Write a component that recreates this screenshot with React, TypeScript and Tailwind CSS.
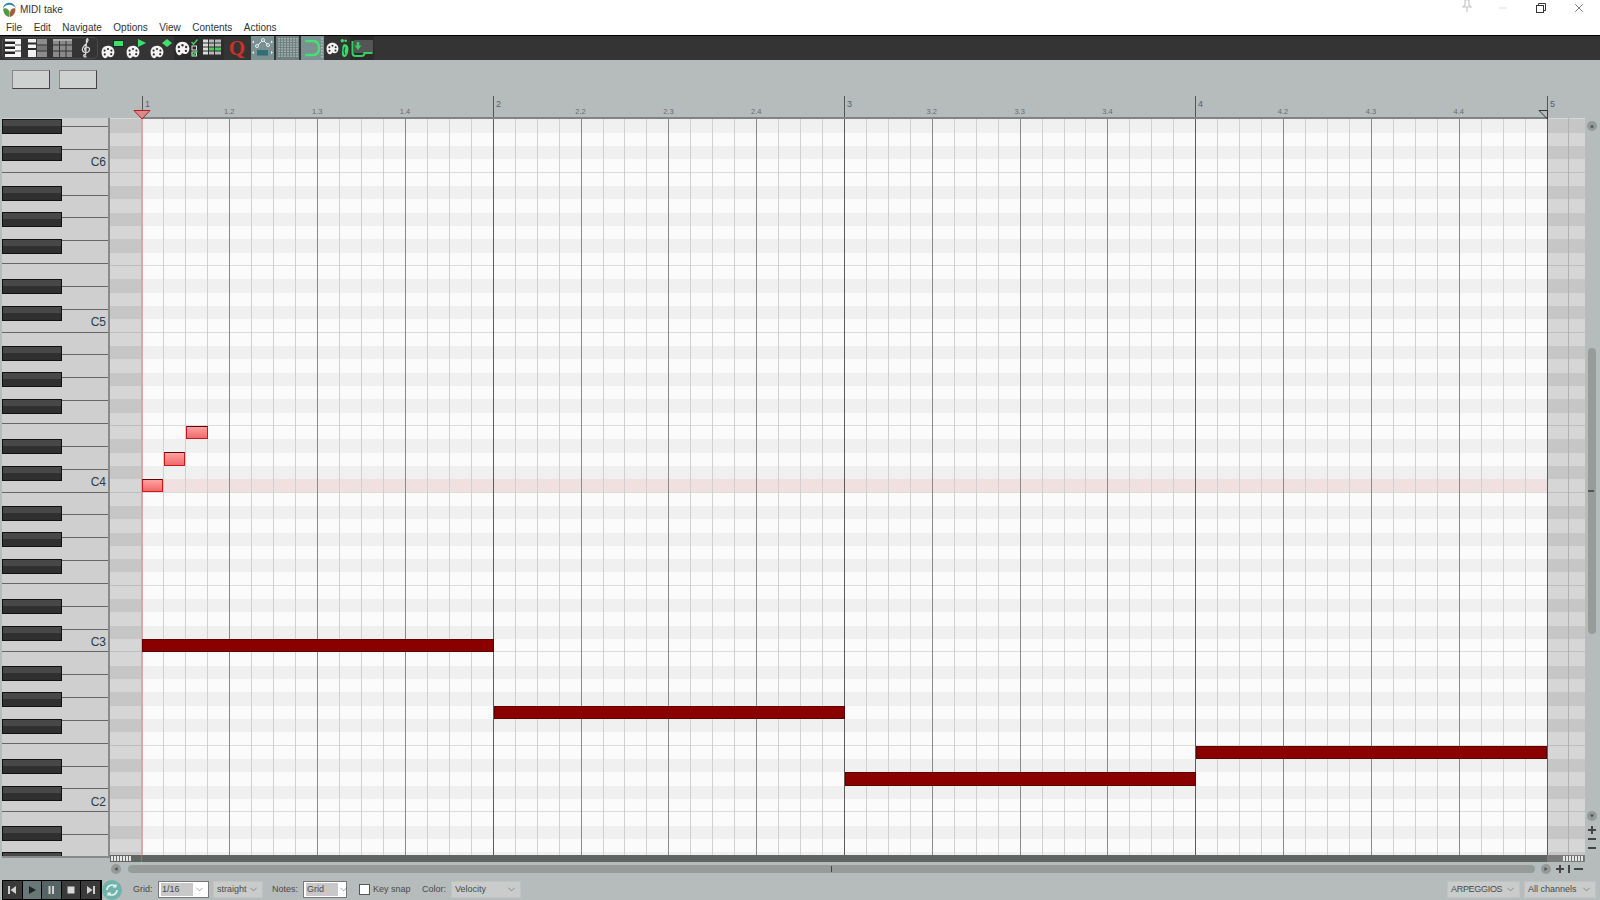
import React from "react";
import { ChevronDown, X, Minus } from "lucide-react";

const ROW = 40 / 3;
const semis: number[] = [];
for (let s = 28; s >= -29; s--) semis.push(s);
const isBlack = (s: number) => [1, 3, 6, 8, 10].includes(((s % 12) + 12) % 12);
const mod = (s: number) => ((s % 12) + 12) % 12;
const rowTop = (s: number) => 492.67 - ROW * s - ROW - 118;
const M = 351.25;
const G0 = 32;

function Palette({ s = 14 }: { s?: number }) {
  return (
    <svg width={s} height={s} viewBox="0 0 14 14" className="shrink-0">
      <path d="M7 .8C3 .8.6 3.6.6 7.2c0 3 1.3 5.6 3.2 6 1.7.3 2-1 2.900-1.700.9-.6 1.300 1 3.200.7 2-.4 3.500-2.600 3.500-5C13.400 3.400 10.600.8 7 .8z" fill="#f4f4f4" />
      <circle cx="3.600" cy="5.600" r="1.100" fill="#333" />
      <circle cx="7" cy="4" r="1.100" fill="#333" />
      <circle cx="10.400" cy="5.600" r="1.100" fill="#333" />
      <circle cx="3.800" cy="9.400" r="1.100" fill="#333" />
      <circle cx="10.200" cy="9.200" r="1.100" fill="#333" />
    </svg>
  );
}

function Logo() {
  return (
    <svg width="15" height="15" viewBox="0 0 15 15" className="ml-[2px]">
      <path d="M7 15C3 14 .8 10 1.400 6.400 4 5.600 6.600 7 7.400 9.400 7.800 11 7.600 13 7 15z" fill="#4e9a3c" />
      <path d="M7.600 15c3.800-.8 6.200-4.400 5.800-8.600C11 5.600 8.800 7 8.200 9.400 7.800 11 7.800 13 7.600 15z" fill="#a85a3e" />
      <path d="M1 6C1.600 3 4.200.8 7.400.8c3 0 5.600 2 6.400 5.200C11.600 3.600 9.400 2.800 7.400 2.800 5 2.800 2.800 3.800 1 6z" fill="#2f7fb0" />
    </svg>
  );
}

function PianoIcon() {
  return (
    <svg width="16" height="18" viewBox="0 0 16 18" className="shrink-0">
      <rect x="0" y="0" width="16" height="18" fill="#f5f5f5" />
      <rect x="0" y="2.500" width="10" height="2.500" fill="#222" />
      <rect x="0" y="7.500" width="10" height="2.500" fill="#222" />
      <rect x="0" y="12.500" width="10" height="2.500" fill="#222" />
      <rect x="10" y="5.500" width="6" height="1" fill="#444" />
      <rect x="10" y="11.500" width="6" height="1" fill="#444" />
    </svg>
  );
}

function NamedIcon() {
  return (
    <svg width="19" height="18" viewBox="0 0 19 18" className="shrink-0">
      <rect x="0" y="0" width="8" height="18" fill="#f2f2f2" />
      <rect x="0" y="3.500" width="8" height="2" fill="#2a2a2a" />
      <rect x="0" y="9" width="8" height="2" fill="#2a2a2a" />
      <rect x="9" y="0" width="10" height="5.500" fill="#8c8c8c" />
      <rect x="9" y="6.500" width="10" height="5" fill="#777" />
      <rect x="9" y="12.500" width="10" height="5.500" fill="#8c8c8c" />
    </svg>
  );
}

function DrumIcon() {
  return (
    <svg width="19" height="18" viewBox="0 0 19 18" className="shrink-0">
      <rect x="0" y="0" width="19" height="18" fill="#8a8a8a" />
      <rect x="0" y="5.500" width="19" height="1" fill="#333" />
      <rect x="0" y="11.500" width="19" height="1" fill="#333" />
      <rect x="6" y="0" width="1" height="18" fill="#333" />
      <rect x="12.500" y="0" width="1" height="18" fill="#333" />
      <rect x="0" y="0" width="19" height="2" fill="#aaa" />
    </svg>
  );
}

function ClefIcon() {
  return (
    <svg width="10" height="20" viewBox="0 0 10 20" fill="none" stroke="#d8d8d8" strokeWidth="1.300" className="shrink-0">
      <path d="M5.500 18.500c-1.500 1-3 .2-2.800-1 .2-1 1.600-1 1.800 0L5.500 4c-.2-1.500 0-3 1-3.300 1 .6.800 3-3 6.800-2 2-2.500 3.500-2 5 .6 1.800 3.400 2.500 5.500 1.500 1.800-1 2-3.500.5-4.500-1.500-1-3.500-.2-3.800 1.200-.2 1 .4 1.700 1 2" />
    </svg>
  );
}

function CheckColumn() {
  return (
    <svg width="7" height="18" viewBox="0 0 7 18" fill="none" className="shrink-0">
      <path d="M.5 3l2 2.200L6.500.5" stroke="#3fd35f" strokeWidth="1.500" />
      <rect x="1" y="7" width="4.500" height="4" stroke="#ddd" />
      <rect x="1" y="13" width="4.500" height="4" stroke="#ddd" />
      <path d="M.5 14l2 2.200L6.500 11.500" stroke="#3fd35f" strokeWidth="1.500" />
    </svg>
  );
}

function ListIcon() {
  return (
    <svg width="18" height="18" viewBox="0 0 18 18" className="shrink-0">
      {[0, 4, 8, 12].map((y) => (
        <React.Fragment key={y}>
          <rect x="0" y={y + 0.5} width="5" height="3" fill="#dcdcdc" />
          <rect x="6" y={y + 0.5} width="5" height="3" fill={y === 8 ? "#3fd35f" : "#b8b8b8"} />
          <rect x="12" y={y + 0.5} width="6" height="3" fill={y === 8 ? "#3fd35f" : "#b8b8b8"} />
        </React.Fragment>
      ))}
    </svg>
  );
}

function EnvelopeIcon() {
  return (
    <svg width="23" height="22" viewBox="0 0 23 22" fill="none" className="shrink-0">
      <path d="M6 9l3-3 3-3 4 4 2 3" stroke="#e8efee" strokeWidth="1" />
      <circle cx="6" cy="9" r="1.500" fill="#7b9191" stroke="#e8efee" />
      <circle cx="12" cy="3" r="1.500" fill="#7b9191" stroke="#e8efee" />
      <circle cx="17" cy="8" r="1.500" fill="#7b9191" stroke="#e8efee" />
      <path d="M1 5l2-1.500v3zM22 5l-2-1.500v3zM1 15.500l2-1.500v3zM22 15.500l-2-1.500v3z" fill="#e8efee" />
      <rect x="6" y="13" width="11" height="5.500" fill="#2f6f75" />
    </svg>
  );
}

function GridIcon() {
  return (
    <svg width="20" height="20" viewBox="0 0 20 20" stroke="#cfd8d7" strokeWidth="1" strokeDasharray="1.500 1" className="shrink-0">
      {[1, 4, 7, 10, 13, 16, 19].map((x) => (
        <line key={x} x1={x} x2={x} y1="0" y2="20" />
      ))}
    </svg>
  );
}

function MagnetIcon() {
  return (
    <svg width="20" height="20" viewBox="0 0 20 20" fill="none" className="shrink-0">
      <path d="M2 3h8c4 0 6 3 6 7s-2 7-6 7H2" stroke="#45e070" strokeWidth="2.400" />
      <line x1="19" y1="0" x2="19" y2="20" stroke="#cfd8d7" strokeDasharray="1.500 1.500" />
    </svg>
  );
}

function FootIcon() {
  return (
    <svg width="9" height="20" viewBox="0 0 8 18" className="shrink-0">
      <path d="M3 6c2-1 4 0 4.500 3 .3 3-1 8-3.500 8S1.500 14 2 11c.2-2 0-4 1-5z" fill="#3ddc6a" />
      <circle cx="2" cy="2.500" r="1.500" fill="#3ddc6a" />
      <circle cx="5" cy="2.500" r="1.200" fill="#3ddc6a" />
      <path d="M4.500 8c-1 2-1 5 0 7" stroke="#1c5c30" fill="none" />
    </svg>
  );
}

function RecordIcon() {
  return (
    <svg width="22" height="20" viewBox="0 0 22 20" fill="none" className="shrink-0">
      <rect x="3" y="2" width="19" height="13" fill="#555" />
      <path d="M1.500 3v12c0 2 1 3 3 3h6c2 0 3-1 3-3h8" stroke="#35d060" strokeWidth="2" />
      <path d="M7 4v4" stroke="#35d060" strokeWidth="2.500" />
      <path d="M3.500 7.500h7L7 12z" fill="#35d060" />
    </svg>
  );
}

function Cell({ w, className = "", children }: { w: string; className?: string; children?: React.ReactNode }) {
  return <div className={`flex h-full shrink-0 items-center justify-center overflow-hidden ${w} ${className}`}>{children}</div>;
}

function PaletteWith({ children }: { children: React.ReactNode }) {
  return (
    <div className="flex h-[22px] w-[24px] items-end">
      <Palette s={14} />
      <div className="mb-[12px] ml-[-2px]">{children}</div>
    </div>
  );
}

function TopBar() {
  const menus = ["File", "Edit", "Navigate", "Options", "View", "Contents", "Actions"];
  return (
    <div className="flex h-[36px] flex-col border-b border-black bg-white text-[10px] text-[#333]">
      <div className="flex h-[19px] items-center gap-[3px]">
        <Logo />
        <span>MIDI take</span>
        <div className="ml-auto mb-[3px] flex items-center">
          <svg width="14" height="14" viewBox="0 0 14 14" fill="none" stroke="#c8c8c8" strokeWidth="1.200" className="mr-[23px] mb-[5px]">
            <path d="M4.500 1h5M5 1v5L3 8h8L9 6V1M7 8v5" />
          </svg>
          <Minus size={12} strokeWidth={1} color="#bcbcbc" className="mr-[27px]" />
          <svg width="10" height="10" viewBox="0 0 10 10" fill="none" stroke="#333" className="mr-[26px]">
            <rect x="0.500" y="2.500" width="7" height="7" />
            <path d="M2.500 2.500v-2h7v7h-2" />
          </svg>
          <X size={14} strokeWidth={1} color="#222" className="mr-[14px]" />
        </div>
      </div>
      <div className="flex h-[16px] items-center gap-[11.500px] pl-[6px]">
        {menus.map((m) => (
          <span key={m}>{m}</span>
        ))}
      </div>
    </div>
  );
}

function Toolbar() {
  return (
    <div className="flex h-[24px] items-center bg-[#343434] pl-[2px]">
      <div className="flex h-[22px] w-[96px] shrink-0 items-center rounded-[5px] border border-[#4a4a4a] pl-[2px]">
        <PianoIcon />
        <div className="ml-[7px]"><NamedIcon /></div>
        <div className="ml-[6px]"><DrumIcon /></div>
        <div className="ml-[9px]"><ClefIcon /></div>
      </div>
      <Cell w="w-[25px] ml-[2px]">
        <PaletteWith>
          <svg width="11" height="7"><rect x="0.500" y="0.500" width="10" height="6" fill="#3fe06a" stroke="#222" /></svg>
        </PaletteWith>
      </Cell>
      <Cell w="w-[25px]">
        <PaletteWith>
          <svg width="8" height="8"><path d="M0 0l8 4-8 4z" fill="#3fe06a" /></svg>
        </PaletteWith>
      </Cell>
      <Cell w="w-[24px]">
        <PaletteWith>
          <svg width="10" height="8"><path d="M5 0l5 4-5 4-5-4z" fill="#3fe06a" /></svg>
        </PaletteWith>
      </Cell>
      <Cell w="w-[25px]" className="gap-[1px] bg-[#2a2a2a]">
        <Palette s={15} />
        <CheckColumn />
      </Cell>
      <Cell w="w-[25px]" className="bg-[#2e2e2e]"><ListIcon /></Cell>
      <Cell w="w-[26px]">
        <span className="font-['Liberation_Serif',serif] text-[21px] leading-none font-bold text-[#c8322d]">Q</span>
      </Cell>
      <Cell w="w-[23px] ml-[1px]" className="bg-[#7b9191]"><EnvelopeIcon /></Cell>
      <Cell w="w-[23px] ml-[2px]" className="bg-[#6f8080]"><GridIcon /></Cell>
      <Cell w="w-[23px] ml-[2px]" className="bg-[#7b9191]"><MagnetIcon /></Cell>
      <Cell w="w-[26px]" className="gap-[1px]"><Palette s={13} /><FootIcon /></Cell>
      <Cell w="w-[24px]" className="bg-[#2b2b2b]"><RecordIcon /></Cell>
    </div>
  );
}

function Ruler() {
  const beats = [1, 2, 3];
  return (
    <div className="relative z-10 h-[22px]">
      {[0, 1, 2, 3, 4].map((m) => (
        <React.Fragment key={m}>
          <div className="absolute top-0 h-[22px] w-px bg-[#555]" style={{ left: Math.floor(142 + m * M) }} />
          <span className="absolute top-[2px] text-[9px] leading-[12px] text-[#56606a]" style={{ left: Math.floor(142 + m * M) + 3 }}>
            {m + 1}
          </span>
          {m < 4 &&
            beats.map((b) => (
              <span
                key={b}
                className="absolute top-[11px] w-[20px] text-center text-[7.500px] leading-[10px] text-[#6a6a6a]"
                style={{ left: 142 + m * M + (b * M) / 4 - 10.500 }}
              >
                {m + 1}.{b + 1}
              </span>
            ))}
        </React.Fragment>
      ))}
      <div className="absolute bottom-[-1px] left-[142px] h-[2px] w-[1405px] bg-[#7f8584]" />
      <svg className="absolute left-[133px] top-[14px]" width="18" height="10" viewBox="0 0 18 10">
        <path d="M1 .5h16L9 9z" fill="#d98a8a" stroke="#b02020" />
      </svg>
      <svg className="absolute left-[1538px] top-[14px]" width="10" height="10" viewBox="0 0 10 10" fill="none">
        <path d="M9.500.500H1L9.500 9z" stroke="#333" />
      </svg>
    </div>
  );
}

function Piano() {
  const heights: number[] = [9];
  let y = 127;
  while (y < 860) {
    heights.push(160 / 7);
    y += 160 / 7;
  }
  return (
    <div className="relative ml-[2px] h-[740px] w-[108px] shrink-0 overflow-hidden border-r-2 border-b-2 border-[#8a8a8a] bg-[#cfcfcf]">
      <div className="flex flex-col">
        {heights.map((h, i) => (
          <div key={i} className="shrink-0 border-b border-[#666]" style={{ height: h }} />
        ))}
      </div>
      {semis.filter(isBlack).map((s) => (
        <div
          key={s}
          className="absolute left-0 flex h-[15px] w-[60px] flex-col border border-[#111] bg-[#303030]"
          style={{ top: rowTop(s) - 0.5 }}
        >
          <div className="h-[6px] bg-[#484848]" />
        </div>
      ))}
      {[
        ["C6", 24],
        ["C5", 12],
        ["C4", 0],
        ["C3", -12],
        ["C2", -24],
      ].map(([n, s]) => (
        <span key={n} className="absolute right-[2px] text-[12px] leading-[14px] text-[#2c3a4a]" style={{ top: rowTop(s as number) - 4 }}>
          {n}
        </span>
      ))}
    </div>
  );
}

function Grid() {
  const lines: { x: number; c: string }[] = [];
  for (let i = 1; i < 80; i++) {
    const x = Math.floor(G0 + (i * M) / 16);
    lines.push({ x, c: i % 16 === 0 ? "#5c5c5c" : i % 4 === 0 ? "#8a8a8a" : "#d0d0d0" });
  }
  const notes = [
    { x: 142, w: 21, s: 0, pink: true },
    { x: 164, w: 21, s: 2, pink: true },
    { x: 186, w: 22, s: 4, pink: true },
    { x: 142, w: 351.5, s: -12 },
    { x: 494, w: 351, s: -17 },
    { x: 845, w: 351, s: -22 },
    { x: 1196, w: 351, s: -20 },
  ];
  return (
    <div className="relative h-[737px] overflow-hidden">
      <div className="flex flex-col">
        {semis.map((s, i) => {
          const b = isBlack(s);
          const m = mod(s);
          const line = m === 0 || m === 5;
          return (
            <div key={s} className="flex shrink-0" style={{ height: i === 0 ? ROW / 10 : ROW }}>
              <div className={`w-[32px] ${b ? "bg-[#c6c6c6]" : "bg-[#d6d6d6]"} ${line ? "border-b border-[#bdbdbd]" : ""}`} />
              <div
                className={`flex-1 ${s === 0 ? "bg-[#f1e0e0]" : b ? "bg-[#f0f0f0]" : "bg-[#fbfbfb]"} ${
                  line ? "border-b border-[#dcdcdc]" : ""
                }`}
              />
              <div className={`w-[38px] ${b ? "bg-[#c6c6c6]" : "bg-[#d6d6d6]"} ${line ? "border-b border-[#bdbdbd]" : ""}`} />
            </div>
          );
        })}
      </div>
      {lines.map((l) => (
        <div key={l.x} className="absolute top-0 h-full w-px" style={{ left: l.x, background: l.c }} />
      ))}
      <div className="absolute top-0 left-[31px] h-full w-[2px] bg-[#d4a9a9]" />
      <div className="absolute top-0 left-[1458px] h-full w-px bg-[#b0b0b0]" />
      {notes.map((n) => (
        <div
          key={`${n.x}-${n.s}`}
          className={
            n.pink
              ? "absolute border border-[#c81818] border-t-[#5a0808] bg-gradient-to-b from-[#ffa0a0] to-[#f06a6a]"
              : "absolute border border-[#5c0000] bg-[#8a0000]"
          }
          style={{ left: n.x - 110, width: n.w, top: rowTop(n.s) - 0.3, height: ROW }}
        />
      ))}
    </div>
  );
}

function Strip() {
  const dots = "h-[5px] bg-[repeating-linear-gradient(90deg,#e6e6e6_0_2px,#6a6a6a_2px_3px)]";
  return (
    <div className="flex h-[7px] items-center bg-[#606463]">
      <div className={`ml-px w-[20px] ${dots}`} />
      <div className="ml-[10px] h-full w-px bg-[#a86a6a]" />
      <div className="ml-auto flex h-full w-[38px] items-center bg-[#7c7c7c]">
        <div className={`ml-[16px] w-[21px] ${dots}`} />
      </div>
    </div>
  );
}

function Circle({ dir }: { dir: "up" | "down" | "left" | "right" }) {
  const d = { up: "M3 6.500L5 3.500l2 3z", down: "M3 3.500L5 6.500l2-3z", left: "M6.500 3L3.500 5l3 2z", right: "M3.500 3l3 2-3 2z" }[dir];
  return (
    <svg width="10" height="10" viewBox="0 0 10 10" className="shrink-0">
      <circle cx="5" cy="5" r="5" fill="#959a99" />
      <path d={d} fill="#4c4c4c" />
    </svg>
  );
}

function PlusMark() {
  return (
    <div className="relative h-[8px] w-[8px] shrink-0">
      <div className="absolute top-[3px] left-0 h-[2px] w-[8px] bg-[#444]" />
      <div className="absolute top-0 left-[3px] h-[8px] w-[2px] bg-[#444]" />
    </div>
  );
}

function VScroll() {
  return (
    <div className="flex w-[15px] shrink-0 flex-col items-center pt-[3px] pr-[1px]">
      <Circle dir="up" />
      <div className="mt-[217px] flex h-[286px] w-[8px] shrink-0 items-center rounded-[4px] bg-[#979c9b]">
        <div className="h-[2px] w-[6px] bg-[#555]" />
      </div>
      <div className="mt-[177px] flex flex-col items-center">
        <Circle dir="down" />
        <div className="mt-[5px]"><PlusMark /></div>
        <div className="mt-[4px] h-[2px] w-[8px] bg-[#444]" />
        <div className="mt-[7px] h-[2px] w-[8px] bg-[#444]" />
      </div>
    </div>
  );
}

function HScroll() {
  return (
    <div className="flex h-[13px] items-center pl-[111px]">
      <Circle dir="left" />
      <div className="ml-[7px] flex h-[8px] w-[1407px] shrink-0 items-center justify-center rounded-[4px] bg-[#979c9b]">
        <div className="h-[6px] w-px bg-[#444]" />
      </div>
      <div className="ml-[6px]"><Circle dir="right" /></div>
      <div className="ml-[5px]"><PlusMark /></div>
      <div className="ml-[4px] h-[8px] w-[2px] bg-[#444]" />
      <div className="ml-[4px] h-[2px] w-[9px] bg-[#444]" />
    </div>
  );
}

function Select({ w, label, white, hi, ml, tight }: { w: string; label: string; white?: boolean; hi?: boolean; ml: string; tight?: boolean }) {
  return (
    <div
      className={`flex h-[17px] shrink-0 items-center justify-between pr-[3px] pl-[2px] ${w} ${ml} ${
        white ? "border border-[#777] bg-white" : "border border-[#bfc4c3] bg-[#c9cccb]"
      }`}
    >
      <span className={`px-[1px] leading-[13px] whitespace-nowrap ${hi ? "min-w-[32px] bg-[#c8c8c8]" : ""} ${tight ? "tracking-[-0.3px]" : ""}`}>{label}</span>
      <ChevronDown size={11} strokeWidth={1.200} color="#555" className="shrink-0" />
    </div>
  );
}

function TransportIcon({ kind }: { kind: string }) {
  const paths: Record<string, React.ReactNode> = {
    start: <path d="M1 1h2v8H1zM9 1v8L3.500 5z" />,
    play: <path d="M2 1l7 4-7 4z" fill="#222" />,
    pause: <path d="M2.500 1h2v8h-2zM6 1h2v8H6z" />,
    stop: <path d="M1.500 1.500h7v7h-7z" fill="#d8d8d8" />,
    end: <path d="M1 1v8l5.500-4zM7 1h2v8H7z" />,
  };
  return (
    <svg width="10" height="10" viewBox="0 0 10 10" fill="#d0d0d0">
      {paths[kind]}
    </svg>
  );
}

function Transport() {
  return (
    <div className="ml-[2px] flex h-[20px] w-[100px] shrink-0 bg-black p-[1px]">
      {[
        ["start", "bg-[#3a3a3a]"],
        ["play", "bg-[#687878]"],
        ["pause", "bg-[#556464]"],
        ["stop", "bg-[#3a3a3a]"],
        ["end", "bg-[#3a3a3a]"],
      ].map(([k, c]) => (
        <div key={k} className={`flex flex-1 items-center justify-center border-r border-black ${c}`}>
          <TransportIcon kind={k} />
        </div>
      ))}
    </div>
  );
}

function Bottom() {
  return (
    <div className="flex h-[25px] items-center pt-[4px] text-[9px] text-[#4a4a4a]">
      <Transport />
      <svg width="20" height="20" viewBox="0 0 20 20" className="shrink-0" fill="none">
        <circle cx="10" cy="10" r="10" fill="#6fb3ab" />
        <path d="M5 10a5 5 0 0 1 8-4M15 10a5 5 0 0 1-8 4" stroke="#e6f2f0" strokeWidth="1.600" />
        <path d="M14.500 3.500v4h-4zM5.500 16.500v-4h4z" fill="#e6f2f0" />
      </svg>
      <span className="ml-[11px] w-[25px] shrink-0">Grid:</span>
      <Select w="w-[51px]" ml="" label="1/16" white hi />
      <Select w="w-[50px]" ml="ml-[4px]" label="straight" />
      <span className="ml-[9px] w-[31px] shrink-0">Notes:</span>
      <Select w="w-[44px]" ml="" label="Grid" white hi />
      <div className="ml-[12px] h-[11px] w-[11px] shrink-0 border border-[#555] bg-white" />
      <span className="ml-[3px] w-[49px] shrink-0">Key snap</span>
      <span className="w-[29px] shrink-0">Color:</span>
      <Select w="w-[70px]" ml="" label="Velocity" />
      <div className="ml-auto flex pr-[4px]">
        <Select w="w-[73px]" ml="" label="ARPEGGIOS" tight />
        <Select w="w-[72px]" ml="ml-[4px]" label="All channels" />
      </div>
    </div>
  );
}

export default function App() {
  return (
    <div className="flex h-[900px] w-[1600px] flex-col overflow-hidden bg-[#b6bcbb] font-['Liberation_Sans',sans-serif]">
      <TopBar />
      <Toolbar />
      <div className="flex h-[36px] items-center gap-[9px] pt-[2px] pl-[12px]">
        <div className="h-[19px] w-[38px] border border-t-[#888] border-r-[#444] border-b-[#444] border-l-[#888] bg-[#cfd1d0]" />
        <div className="h-[19px] w-[38px] border border-t-[#888] border-r-[#444] border-b-[#444] border-l-[#888] bg-[#cfd1d0]" />
      </div>
      <Ruler />
      <div className="flex h-[744px]">
        <Piano />
        <div className="flex w-[1475px] shrink-0 flex-col">
          <Grid />
          <Strip />
        </div>
        <VScroll />
      </div>
      <HScroll />
      <Bottom />
    </div>
  );
}
